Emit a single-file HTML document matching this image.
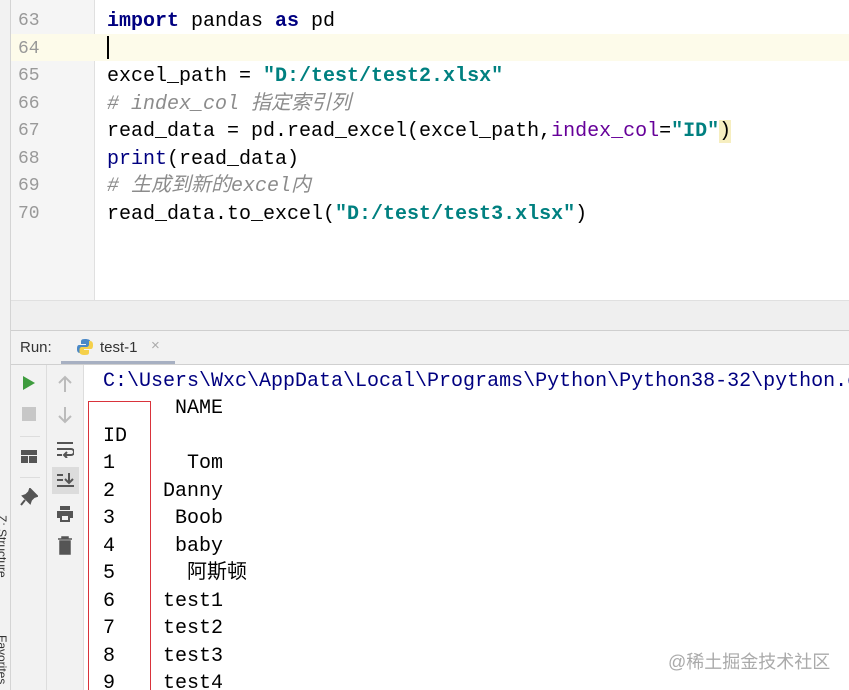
<!DOCTYPE html>
<html><head><meta charset="utf-8"><style>
*{margin:0;padding:0;box-sizing:border-box}
html,body{width:849px;height:690px;overflow:hidden}
body{background:#fff;position:relative;font-family:"Liberation Mono","Noto Sans CJK SC",monospace}
.abs{position:absolute}
.ln{position:absolute;left:18px;font-size:18px;color:#999;line-height:27.5px}
.code{position:absolute;left:107px;font-size:20px;line-height:27.5px;white-space:pre;color:#000}
.kw{color:#000080;font-weight:bold}
.str{color:#008080;font-weight:bold}
.cm{color:#8c8c8c;font-style:italic}
.nm{color:#660099}
.con{position:absolute;left:103px;font-size:20px;line-height:27.5px;white-space:pre;color:#000}
</style></head><body>
<div class="abs" style="left:0;top:0;width:11px;height:690px;background:#f2f2f2;border-right:1px solid #d4d4d4"></div>
<div class="abs" style="left:11px;top:0;width:84px;height:300px;background:#f5f5f5;border-right:1px solid #e0e0e0"></div>
<div class="abs" style="left:11px;top:34px;width:838px;height:27px;background:#fdfbea"></div>
<div class="abs" style="left:107px;top:36px;width:2px;height:23px;background:#000"></div>
<div class="ln" style="top:8px">63<br>64<br>65<br>66<br>67<br>68<br>69<br>70</div>
<div class="code" style="top:8px"><span class="kw">import</span> pandas <span class="kw">as</span> pd

excel_path = <span class="str">"D:/test/test2.xlsx"</span>
<span class="cm"># index_col 指定索引列</span>
read_data = pd.read_excel(excel_path,<span class="nm">index_col</span>=<span class="str">"ID"</span><span style="background:#f6eec0">)</span>
<span style="color:#000080">print</span>(read_data)
<span class="cm"># 生成到新的excel内</span>
read_data.to_excel(<span class="str">"D:/test/test3.xlsx"</span>)</div>
<div class="abs" style="left:11px;top:300px;width:838px;height:30px;background:#efefef;border-top:1px solid #e0e0e0"></div>
<div class="abs" style="left:11px;top:330px;width:838px;height:35px;background:#f2f2f2;border-top:1px solid #cfcfcf;border-bottom:1px solid #d0d0d0"></div>
<div class="abs" style="left:20px;top:339px;font-family:'Liberation Sans',sans-serif;font-size:15px;color:#333">Run:</div>
<svg class="abs" style="left:76px;top:338px" width="18" height="18" viewBox="0 0 18 18"><path d="M9 1c-4 0-4 1.5-4 3v2h5v1H3c-2 0-2 3-2 4s0 4 3 4h1v-3c0-2 1-3 3-3h4c1.5 0 2.5-1 2.5-2.5V4c0-2-2-3-5.5-3z" fill="#4a88c7"/><path d="M9 17c4 0 4-1.5 4-3v-2H8v-1h7c2 0 2-3 2-4s0-4-3-4h-1v3c0 2-1 3-3 3H6c-1.5 0-2.5 1-2.5 2.5V14c0 2 2 3 5.5 3z" fill="#f5d04a"/></svg>
<div class="abs" style="left:100px;top:339px;font-family:'Liberation Sans',sans-serif;font-size:15px;color:#333">test-1</div>
<div class="abs" style="left:151px;top:337px;font-family:'Liberation Sans',sans-serif;font-size:15px;color:#aaa">×</div>
<div class="abs" style="left:61px;top:361px;width:114px;height:3px;background:#a7b0c2"></div>
<div class="abs" style="left:11px;top:365px;width:36px;height:325px;background:#f2f2f2;border-right:1px solid #ddd"></div>
<div class="abs" style="left:47px;top:365px;width:37px;height:325px;background:#f2f2f2;border-right:1px solid #ddd"></div>
<svg class="abs" style="left:22px;top:375px" width="14" height="16"><path d="M1 1L13 8L1 15Z" fill="#3e9c3e"/></svg>
<div class="abs" style="left:22px;top:407px;width:14px;height:14px;background:#c7c7c7"></div>
<div class="abs" style="left:20px;top:436px;width:20px;height:1px;background:#ddd"></div>
<div class="abs" style="left:21px;top:450px;width:16px;height:13px;background:#555;border-top:6px solid #555"></div>
<div class="abs" style="left:21px;top:455px;width:16px;height:1px;background:#f2f2f2"></div>
<div class="abs" style="left:28px;top:455px;width:1px;height:8px;background:#f2f2f2"></div>
<div class="abs" style="left:20px;top:477px;width:20px;height:1px;background:#ddd"></div>
<svg class="abs" style="left:20px;top:488px" width="18" height="18"><path d="M10 1l7 7-3 1-3 3-1 3-7-7 3-1 3-3zM5 12l-4 5" stroke="#555" stroke-width="2" fill="#555"/></svg>
<svg class="abs" style="left:56px;top:375px" width="18" height="18"><path d="M9 2v15M3 8l6-6 6 6" stroke="#bbb" stroke-width="2" fill="none"/></svg>
<svg class="abs" style="left:56px;top:406px" width="18" height="18"><path d="M9 1v15M3 10l6 6 6-6" stroke="#bbb" stroke-width="2" fill="none"/></svg>
<svg class="abs" style="left:56px;top:440px" width="18" height="18"><path d="M1 3h16M1 9h14a3 3 0 0 1 0 6H9M11 12l-3 3 3 3M1 15h5" stroke="#555" stroke-width="2" fill="none"/></svg>
<div class="abs" style="left:52px;top:467px;width:27px;height:27px;background:#dcdcdc"></div>
<svg class="abs" style="left:56px;top:471px" width="20" height="20"><path d="M1 4h6M1 9h6M1 15h17M13 2v10M9 8l4 4 4-4" stroke="#555" stroke-width="2" fill="none"/></svg>
<svg class="abs" style="left:56px;top:505px" width="18" height="18"><path d="M4 1h10v4H4zM1 6h16v7h-3v4H4v-4H1z" fill="#555"/><path d="M6 11h6v4H6z" fill="#f2f2f2"/></svg>
<svg class="abs" style="left:57px;top:536px" width="16" height="19"><path d="M1 3h14M5 3V1h6v2M3 5h10v13H3z" fill="#555" stroke="#555" stroke-width="1.5"/></svg>
<div class="abs" style="left:9px;top:515px;transform:rotate(90deg);transform-origin:left top;font-family:'Liberation Sans',sans-serif;font-size:12px;color:#333;white-space:nowrap">Z: Structure</div>
<div class="abs" style="left:9px;top:635px;transform:rotate(90deg);transform-origin:left top;font-family:'Liberation Sans',sans-serif;font-size:12px;color:#333;white-space:nowrap">Favorites</div>
<div class="con" style="top:368px;color:#000080">C:\Users\Wxc\AppData\Local\Programs\Python\Python38-32\python.exe</div>
<div class="con" style="top:395px">      NAME
ID
1      Tom
2    Danny
3     Boob
4     baby
5      阿斯顿
6    test1
7    test2
8    test3
9    test4</div>
<div class="abs" style="left:88px;top:401px;width:63px;height:300px;border:1px solid #d9333b"></div>
<div class="abs" style="left:668px;top:648px;font-family:'Liberation Sans','Noto Sans CJK SC',sans-serif;font-size:18px;color:#aaa">@稀土掘金技术社区</div>
</body></html>
